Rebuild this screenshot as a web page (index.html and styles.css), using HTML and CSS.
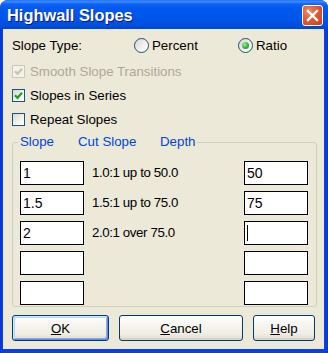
FILE: index.html
```html
<!DOCTYPE html>
<html>
<head>
<meta charset="utf-8">
<link rel="stylesheet" href="styles.css">
</head>
<body>
<div class="window">
  <div class="titlebar">
    <span class="title">Highwall Slopes</span>
    <span class="close">
      <svg width="19" height="19" viewBox="0 0 19 19"><path d="M5 5L14 14M14 5L5 14" stroke="#fff" stroke-width="2.4" stroke-linecap="square"/></svg>
    </span>
  </div>
  <div class="client">
    <div class="row row-type">
      <span class="type-label">Slope Type:</span>
      <span class="radio-opt percent"><span class="radio"></span>Percent</span>
      <span class="radio-opt"><span class="radio checked"></span>Ratio</span>
    </div>
    <div class="row disabled-text">
      <span class="check disabled"><svg width="9" height="9" viewBox="0 0 9 9"><path d="M1 4.2L3.5 6.8L8 1.8" fill="none" stroke="#c7c5b2" stroke-width="2.2"/></svg></span>Smooth Slope Transitions
    </div>
    <div class="row">
      <span class="check"><svg width="9" height="9" viewBox="0 0 9 9"><path d="M1 4.2L3.5 6.8L8 1.8" fill="none" stroke="#21a121" stroke-width="2.2"/></svg></span>Slopes in Series
    </div>
    <div class="row">
      <span class="check"></span>Repeat Slopes
    </div>
    <fieldset class="group">
      <legend><span class="lg-slope">Slope</span><span class="lg-cut">Cut Slope</span><span>Depth</span></legend>
      <div class="grid">
        <div class="field">1</div><div class="desc">1.0:1 up to 50.0</div><div class="field">50</div>
        <div class="field">1.5</div><div class="desc">1.5:1 up to 75.0</div><div class="field">75</div>
        <div class="field">2</div><div class="desc">2.0:1 over 75.0</div><div class="field"><span class="caret"></span></div>
        <div class="field"></div><div class="desc"></div><div class="field"></div>
        <div class="field"></div><div class="desc"></div><div class="field"></div>
      </div>
    </fieldset>
    <div class="buttons">
      <div class="btn ok"><u>O</u>K</div>
      <div class="btn cancel"><u>C</u>ancel</div>
      <div class="btn help"><u>H</u>elp</div>
    </div>
  </div>
</div>
</body>
</html>
```
FILE: styles.css
```css
html, body {
  margin: 0;
  padding: 0;
  background: #fff;
}
body {
  font-family: "Liberation Sans", Arial, sans-serif;
  font-size: 13.3px;
  color: #000;
}
.window {
  width: 328px;
  height: 353px;
  box-sizing: border-box;
  display: flex;
  flex-direction: column;
  background: linear-gradient(to right, #0831d9 0, #0a3fe0 2px, #0a3fe0 calc(100% - 2px), #0831d9 100%);
  border-radius: 8px 8px 0 0;
  overflow: hidden;
}
.titlebar {
  height: 29px;
  flex: none;
  display: flex;
  align-items: center;
  justify-content: space-between;
  padding: 0 5px 0 7px;
  background: linear-gradient(to bottom, #1f6ffd 0%, #3b8cff 6%, #0f62f4 14%, #0058ee 32%, #0055e8 65%, #004fe0 85%, #0046d4 100%);
}
.title {
  color: #fff;
  font-weight: bold;
  font-size: 16.4px;
  text-shadow: 1px 1px #0a1883;
  margin-top: 1px;
}
.close {
  width: 21px;
  height: 21px;
  box-sizing: border-box;
  border: 1px solid #fff;
  border-radius: 3px;
  background: radial-gradient(circle at 30% 30%, #f08a68 0%, #df5a33 45%, #c8401c 100%);
  display: flex;
  align-items: center;
  justify-content: center;
  margin-top: 2px;
}
.client {
  flex: 1;
  margin: 0 4px 4px 3px;
  background: #ece9d8;
  padding: 5px 7px 8px 9px;
  display: flex;
  flex-direction: column;
}
.row {
  height: 24px;
  display: flex;
  align-items: center;
  white-space: nowrap;
}
.row-type {
  height: 23px;
  margin-bottom: 2px;
}
.type-label {
  width: 122px;
}
.radio-opt {
  display: flex;
  align-items: center;
}
.percent {
  width: 104px;
}
.radio {
  width: 15px;
  height: 15px;
  box-sizing: border-box;
  border-radius: 50%;
  border: 1px solid #1c5180;
  background: linear-gradient(135deg, #d8d6cc 0%, #f4f3ee 60%, #fff 100%);
  margin-right: 3px;
  display: flex;
  align-items: center;
  justify-content: center;
}
.radio.checked::after {
  content: "";
  width: 7px;
  height: 7px;
  border-radius: 50%;
  background: radial-gradient(circle at 35% 35%, #a8eea4 0%, #3cc13a 45%, #159615 100%);
}
.check {
  width: 13px;
  height: 13px;
  box-sizing: border-box;
  border: 1px solid #1c5180;
  background: linear-gradient(135deg, #d8d6cc 0%, #f4f3ee 60%, #fff 100%);
  margin-right: 5px;
  display: flex;
  align-items: center;
  justify-content: center;
}
.check.disabled {
  border-color: #cac8bb;
  background: #f2f1ea;
}
.disabled-text {
  color: #aca899;
}
.group {
  margin: 3px 0 0 0;
  padding: 11px 8px 1px 7px;
  border: 1px solid #d0d0bf;
  border-radius: 3px;
  min-width: 0;
}
.group legend {
  padding: 0 2px;
  margin-left: -2px;
  line-height: 16px;
  color: #0046d5;
  white-space: nowrap;
}
.lg-slope {
  display: inline-block;
  width: 58px;
}
.lg-cut {
  display: inline-block;
  width: 82px;
}
.grid {
  display: grid;
  grid-template-columns: 64px 1fr 64px;
  column-gap: 8px;
  row-gap: 6px;
}
.field {
  height: 24px;
  box-sizing: border-box;
  border: 1px solid #000;
  background: #fff;
  padding: 0 2px;
  line-height: 21px;
  font-size: 14px;
  display: flex;
  align-items: center;
}
.caret {
  display: block;
  width: 1px;
  height: 16px;
  background: #000;
}
.desc {
  line-height: 24px;
  letter-spacing: -0.4px;
  white-space: nowrap;
}
.buttons {
  display: flex;
  gap: 10px;
  margin-top: 8px;
}
.btn {
  height: 26px;
  box-sizing: border-box;
  border: 1px solid #003c74;
  border-radius: 3px;
  background: linear-gradient(to bottom, #ffffff 0%, #f6f5f0 35%, #efede4 75%, #e3e0d4 92%, #d6d0c5 100%);
  box-shadow: inset 0 -2px #d8d4c8;
  display: flex;
  align-items: center;
  justify-content: center;
}
.ok {
  width: 97px;
  box-shadow: inset 1px 1px #cee7ff, inset -1px -1px #6982ee, inset 2px 2px #bcd4f6, inset -2px -2px #89ade4;
}
.cancel {
  width: 124px;
}
.help {
  width: 62px;
}
```
